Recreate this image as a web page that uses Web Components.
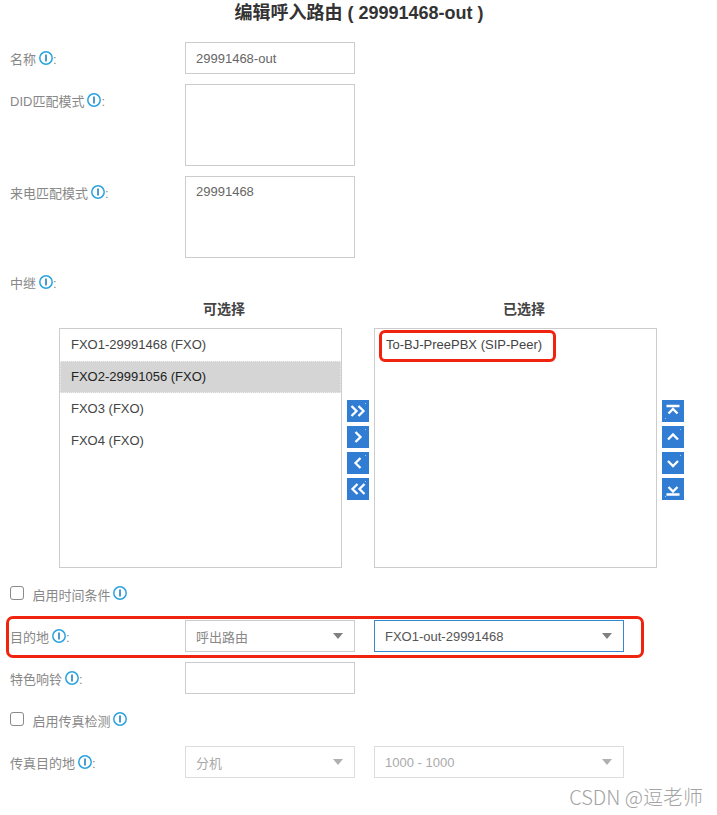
<!DOCTYPE html>
<html lang="zh">
<head>
<meta charset="utf-8">
<title>编辑呼入路由</title>
<style>
    html, body { margin: 0; background: #fff; }
    body { font-family: "Liberation Sans", "Noto Sans CJK SC", sans-serif; font-size: 13px; color: #555; }
</style>
</head>
<body>
<route-form></route-form>

<script>
const FONT = `"Liberation Sans", "Noto Sans CJK SC", sans-serif`;

class InfoIcon extends HTMLElement
{
    constructor()
    {
        super();
        this.attachShadow({ mode: "open" }).innerHTML = `
            <style>
                :host { display: inline-block; width: 14px; height: 14px; position: relative; top: -3px; vertical-align: middle; margin-left: 3px; }
                svg { display: block; }
            </style>
            <svg width="14" height="14" viewBox="0 0 14 14">
                <circle cx="7" cy="7" r="6.2" fill="#fff" stroke="#2ba3de" stroke-width="1.5"/>
                <path d="M7 3.6v6.8" stroke="#3a8fc6" stroke-width="1.8"/>
            </svg>
        `;
    }
}

class FieldLabel extends HTMLElement
{
    constructor()
    {
        super();
        this.attachShadow({ mode: "open" }).innerHTML = `
            <style>
                :host { display: block; color: #888; height: 32px; line-height: 36px; white-space: nowrap; }
            </style>
            <slot></slot><info-icon></info-icon><span>:</span>
        `;
    }
}

class TextBox extends HTMLElement
{
    constructor()
    {
        super();
        this.attachShadow({ mode: "open" }).innerHTML = `
            <style>
                :host { display: block; box-sizing: border-box; width: 170px; height: 32px; border: 1px solid #ccc; padding: 0 10px; line-height: 31px; color: #666; background: #fff; white-space: nowrap; }
                :host([tall]) { height: 82px; line-height: 30px; }
            </style>
            <slot></slot>
        `;
    }
}

class SelectBox extends HTMLElement
{
    constructor()
    {
        super();
        this.attachShadow({ mode: "open" }).innerHTML = `
            <style>
                :host { display: flex; align-items: center; justify-content: space-between; box-sizing: border-box; width: 170px; height: 32px; border: 1px solid #ccc; padding: 0 11px 0 10px; color: #888; background: #fff; }
                :host([wide]) { width: 250px; color: #555; }
                :host([focused]) { border-color: #3a86cc; }
                :host([disabled]) { border-color: #ddd; color: #aaa; }
                i { width: 0; height: 0; border: 5px solid transparent; border-top: 6px solid #808080; border-bottom: 0; }
                :host([disabled]) i { border-top-color: #b0b0b0; }
            </style>
            <span><slot></slot></span><i></i>
        `;
    }
}

class FormRow extends HTMLElement
{
    constructor()
    {
        super();
        this.attachShadow({ mode: "open" }).innerHTML = `
            <style>
                :host { display: flex; align-items: flex-start; margin-bottom: 10px; padding-left: 10px; }
                .label { width: 175px; flex: none; }
                .fields { display: flex; gap: 19px; }
            </style>
            <div class="label"><slot name="label"></slot></div>
            <div class="fields"><slot></slot></div>
        `;
    }
}

class CheckRow extends HTMLElement
{
    constructor()
    {
        super();
        this.attachShadow({ mode: "open" }).innerHTML = `
            <style>
                :host { display: flex; align-items: center; height: 32px; padding-left: 10px; color: #888; }
                b { box-sizing: border-box; width: 14px; height: 14px; border: 1.5px solid #8a8a8a; border-radius: 3px; margin-right: 8.5px; }
                span { padding-top: 2px; }
                info-icon { top: 0; margin-left: 2.5px; }
            </style>
            <b></b><span><slot></slot></span><info-icon></info-icon>
        `;
    }
}

class ListItem extends HTMLElement
{
    constructor()
    {
        super();
        this.attachShadow({ mode: "open" }).innerHTML = `
            <style>
                :host { display: block; height: 32px; line-height: 31px; padding-left: 11px; color: #444; white-space: nowrap; }
                :host([selected]) { background: #d5d5d5; color: #222; outline: 1px dotted #eee; outline-offset: -1px; }
            </style>
            <slot></slot>
        `;
    }
}

class ListBox extends HTMLElement
{
    constructor()
    {
        super();
        this.attachShadow({ mode: "open" }).innerHTML = `
            <style>
                :host { display: block; box-sizing: border-box; width: 283px; height: 240px; border: 1px solid #ccc; background: #fff; }
            </style>
            <slot></slot>
        `;
    }
}

const ARROWS = {
    right2: "M4.5 6 9.5 11l-5 5M11.5 6l5 5-5 5",
    right: "M8.5 6 13.5 11l-5 5",
    left: "M13.5 6 8.5 11l5 5",
    left2: "M10.5 6 5.5 11l5 5M17.5 6l-5 5 5 5",
    top: "M6.5 13.5 11 9l4.5 4.5M4.5 6h13",
    up: "M6 13.5 11 8.5l5 5",
    down: "M6 9 11 14l5-5",
    bottom: "M6.5 9 11 13.5 15.5 9M4.5 16.5h13",
};

// the reference has a stray light pixel in a corner of each button
const SPECK = { top: "3,18", bottom: "3,18" };

class MoveButton extends HTMLElement
{
    static get observedAttributes()
    {
        return ["icon"];
    }

    constructor()
    {
        super();
        this.shadow = this.attachShadow({ mode: "open" });
    }

    attributeChangedCallback()
    {
        this.render();
    }

    render()
    {
        const icon = this.getAttribute("icon");
        const speck = (SPECK[icon] || "18,3").split(",");
        this.shadow.innerHTML = `
            <style>
                :host { display: block; width: 22px; height: 22px; background: #307dd3; }
                svg { display: block; }
            </style>
            <svg width="22" height="22" viewBox="0 0 22 22" fill="none" stroke="#fff" stroke-width="2.3">
                <path d="${ARROWS[icon]}"/>
                <rect x="${speck[0]}" y="${speck[1]}" width="1" height="1" fill="#a9c9ee" stroke="none"/>
            </svg>
        `;
    }
}

class DualList extends HTMLElement
{
    constructor()
    {
        super();
        this.attachShadow({ mode: "open" }).innerHTML = `
            <style>
                :host { display: block; position: relative; }
                .heads { display: grid; grid-template-columns: 300px 300px; padding-left: 74px; height: 30px; line-height: 22px; text-align: center; font-weight: bold; font-size: 14px; color: #444; }
                .lists { display: grid; grid-template-columns: 283px 32px 283px 27px; padding-left: 59px; }
                .moves { display: flex; flex-direction: column; justify-content: center; align-items: center; gap: 4px; padding-top: 4px; }
                .moves.side { align-items: flex-end; }
                .mark { position: absolute; left: 379px; top: 32px; width: 177px; height: 32px; box-sizing: border-box; border: 3px solid #f0230f; border-radius: 6px; }
            </style>
            <div class="heads"><div>可选择</div><div>已选择</div></div>
            <div class="lists">
                <list-box><slot name="available"></slot></list-box>
                <div class="moves">
                    <move-button icon="right2"></move-button>
                    <move-button icon="right"></move-button>
                    <move-button icon="left"></move-button>
                    <move-button icon="left2"></move-button>
                </div>
                <list-box><slot name="chosen"></slot></list-box>
                <div class="moves side">
                    <move-button icon="top"></move-button>
                    <move-button icon="up"></move-button>
                    <move-button icon="down"></move-button>
                    <move-button icon="bottom"></move-button>
                </div>
            </div>
            <div class="mark"></div>
        `;
    }
}

class RouteForm extends HTMLElement
{
    constructor()
    {
        super();
        this.attachShadow({ mode: "open" }).innerHTML = `
            <style>
                :host { display: block; position: relative; width: 717px; height: 815px; overflow: hidden; font-family: ${FONT}; font-size: 13px; }
                h1 { margin: 0; height: 42px; padding-left: 1px; line-height: 26px; text-align: center; font-size: 18px; font-weight: bold; color: #333; }
                .mark { position: absolute; left: 6px; top: 616px; width: 638px; height: 42px; box-sizing: border-box; border: 3px solid #f0230f; border-radius: 7px; pointer-events: none; }
                .wm { position: absolute; right: 14px; top: 784px; font-size: 20px; line-height: 26px; color: #a3a3a3; font-family: "Noto Sans CJK SC", sans-serif; font-weight: 300; white-space: nowrap; }
                .trunk { padding-left: 10px; margin-top: -2px; height: 32px; }
                .dual { display: block; margin-bottom: 9px; }
            </style>
            <h1>编辑呼入路由 ( 29991468-out )</h1>
            <form-row><field-label slot="label">名称</field-label><text-box>29991468-out</text-box></form-row>
            <form-row><field-label slot="label">DID匹配模式</field-label><text-box tall></text-box></form-row>
            <form-row><field-label slot="label">来电匹配模式</field-label><text-box tall>29991468</text-box></form-row>
            <field-label class="trunk">中继</field-label>
            <dual-list class="dual">
                <list-item slot="available">FXO1-29991468 (FXO)</list-item>
                <list-item slot="available" selected>FXO2-29991056 (FXO)</list-item>
                <list-item slot="available">FXO3 (FXO)</list-item>
                <list-item slot="available">FXO4 (FXO)</list-item>
                <list-item slot="chosen">To-BJ-PreePBX (SIP-Peer)</list-item>
            </dual-list>
            <check-row style="margin-bottom:11px">启用时间条件</check-row>
            <form-row>
                <field-label slot="label">目的地</field-label>
                <select-box>呼出路由</select-box>
                <select-box wide focused>FXO1-out-29991468</select-box>
            </form-row>
            <form-row><field-label slot="label">特色响铃</field-label><text-box></text-box></form-row>
            <check-row style="margin-top:-1px;margin-bottom:11px">启用传真检测</check-row>
            <form-row>
                <field-label slot="label">传真目的地</field-label>
                <select-box disabled>分机</select-box>
                <select-box wide disabled>1000 - 1000</select-box>
            </form-row>
            <div class="mark"></div>
            <div class="wm">CSDN @逗老师</div>
        `;
    }
}

customElements.define("info-icon", InfoIcon);
customElements.define("field-label", FieldLabel);
customElements.define("text-box", TextBox);
customElements.define("select-box", SelectBox);
customElements.define("form-row", FormRow);
customElements.define("check-row", CheckRow);
customElements.define("list-item", ListItem);
customElements.define("list-box", ListBox);
customElements.define("move-button", MoveButton);
customElements.define("dual-list", DualList);
customElements.define("route-form", RouteForm);
</script>
</body>
</html>
